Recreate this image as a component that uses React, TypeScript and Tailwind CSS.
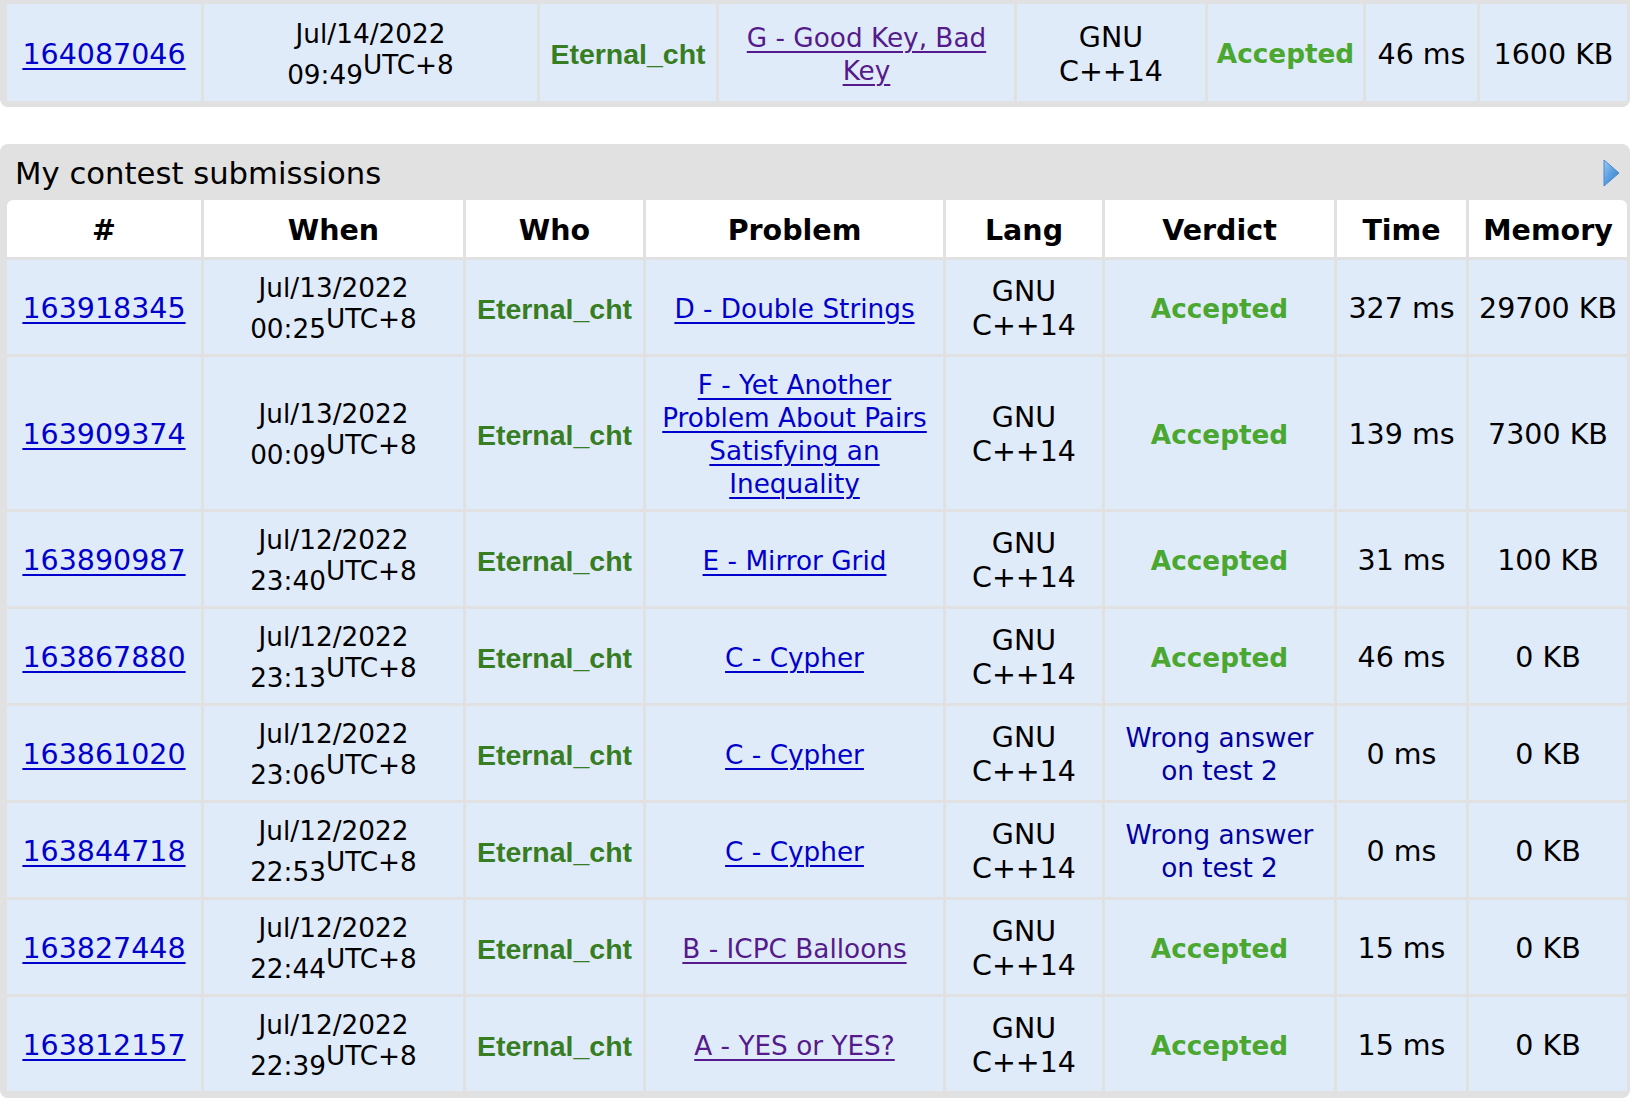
const verdana = { fontFamily: '"DejaVu Sans", Verdana, sans-serif' };

type Sub = {
  id: string;
  date: string;
  time: string;
  problem: string;
  visited: boolean;
  ok: boolean;
  runtime: string;
  memory: string;
};

const topRow: Sub = {
  id: "164087046",
  date: "Jul/14/2022",
  time: "09:49",
  problem: "G - Good Key, Bad Key",
  visited: true,
  ok: true,
  runtime: "46 ms",
  memory: "1600 KB",
};

const submissions: Sub[] = [
  { id: "163918345", date: "Jul/13/2022", time: "00:25", problem: "D - Double Strings", visited: false, ok: true, runtime: "327 ms", memory: "29700 KB" },
  { id: "163909374", date: "Jul/13/2022", time: "00:09", problem: "F - Yet Another Problem About Pairs Satisfying an Inequality", visited: false, ok: true, runtime: "139 ms", memory: "7300 KB" },
  { id: "163890987", date: "Jul/12/2022", time: "23:40", problem: "E - Mirror Grid", visited: false, ok: true, runtime: "31 ms", memory: "100 KB" },
  { id: "163867880", date: "Jul/12/2022", time: "23:13", problem: "C - Cypher", visited: false, ok: true, runtime: "46 ms", memory: "0 KB" },
  { id: "163861020", date: "Jul/12/2022", time: "23:06", problem: "C - Cypher", visited: false, ok: false, runtime: "0 ms", memory: "0 KB" },
  { id: "163844718", date: "Jul/12/2022", time: "22:53", problem: "C - Cypher", visited: false, ok: false, runtime: "0 ms", memory: "0 KB" },
  { id: "163827448", date: "Jul/12/2022", time: "22:44", problem: "B - ICPC Balloons", visited: true, ok: true, runtime: "15 ms", memory: "0 KB" },
  { id: "163812157", date: "Jul/12/2022", time: "22:39", problem: "A - YES or YES?", visited: true, ok: true, runtime: "15 ms", memory: "0 KB" },
];

// text sits a few px below the cell centre in the original, hence pt > pb
const cell = "bg-[#e0ebfa] text-center align-middle px-[6px] pt-[12px] pb-[8px]";
const big = "text-[28.5px] leading-[34px] text-black";
const small = "text-[26.3px] leading-[33px]";
const link = "underline decoration-[2px] underline-offset-[4px]";

const Row = ({ s, h }: { s: Sub; h: string }) => (
  <tr style={verdana}>
    <td className={`${cell} ${h} ${big}`}>
      <a href="#" className={`${link} text-[#0000cc]`}>{s.id}</a>
    </td>
    <td className={`${cell} ${h} ${small} text-black`}>
      <div>{s.date}</div>
      <div className="mt-[8px]">
        {s.time}
        <span className="relative -top-[10px]">UTC+8</span>
      </div>
    </td>
    <td className={`${cell} ${h}`}>
      <span
        className="text-[28.5px] font-bold text-[#377d22]"
        style={{ fontFamily: '"Liberation Sans", Arial, sans-serif' }}
      >
        Eternal_cht
      </span>
    </td>
    <td className={`${cell} ${h} ${small}`}>
      <a href="#" className={`${link} ${s.visited ? "text-[#551a8b]" : "text-[#0000cc]"}`}>{s.problem}</a>
    </td>
    <td className={`${cell} ${h} ${big}`}>
      GNU
      <br />
      C++14
    </td>
    <td className={`${cell} ${h} ${small}`}>
      {s.ok ? (
        <span className="font-bold text-[#4aa72f]">Accepted</span>
      ) : (
        <span className="text-[#0000a0]">
          Wrong answer
          <br />
          on test 2
        </span>
      )}
    </td>
    <td className={`${cell} ${h} ${big}`}>{s.runtime}</td>
    <td className={`${cell} ${h} ${big}`}>{s.memory}</td>
  </tr>
);

const Triangle = () => (
  <svg width="17" height="28" viewBox="0 0 17 28">
    <defs>
      <linearGradient id="tri" x1="0" y1="0" x2="1" y2="1">
        <stop offset="0" stopColor="#9ccaf2" />
        <stop offset="0.5" stopColor="#5a9de0" />
        <stop offset="1" stopColor="#3a78c8" />
      </linearGradient>
    </defs>
    <path d="M1 1 L16 14 L1 27 Z" fill="url(#tri)" stroke="#4a88d4" strokeWidth="1" strokeLinejoin="round" />
  </svg>
);

const headers = ["#", "When", "Who", "Problem", "Lang", "Verdict", "Time", "Memory"];
const topCols = [194, 333, 176, 295, 188, 155, 111, 147];
const mainCols = [194, 259, 177, 297, 156, 229, 129, 158];

export default function App() {
  return (
    <div className="bg-white w-[1638px] min-h-[1104px]">
      {/* last row of the previous table */}
      <div className="w-[1630px] bg-[#e1e1e1] rounded-b-[8px] pl-[4px] pt-[1px] pb-[3px]">
        <table className="w-[1626px] table-fixed border-separate border-spacing-[3px]">
          <colgroup>
            {topCols.map((w, i) => (
              <col key={i} style={{ width: w }} />
            ))}
          </colgroup>
          <tbody>
            <Row s={topRow} h="h-[97px]" />
          </tbody>
        </table>
      </div>

      {/* My contest submissions */}
      <div className="mt-[37px] w-[1630px] bg-[#e1e1e1] rounded-[8px] pl-[4px] pb-[4px]">
        <div className="h-[56px] pt-[2px] pl-[11px] pr-[10px] flex items-center justify-between">
          <span className="text-[30.7px] leading-[51px] text-black" style={verdana}>
            My contest submissions
          </span>
          <Triangle />
        </div>
        <table className="w-[1626px] table-fixed border-separate border-spacing-[3px] -mt-[3px]">
          <colgroup>
            {mainCols.map((w, i) => (
              <col key={i} style={{ width: w }} />
            ))}
          </colgroup>
          <thead>
            <tr style={verdana}>
              {headers.map((h, i) => (
                <th
                  key={h}
                  className={`bg-white h-[57px] pt-[4px] text-[28.5px] leading-[34px] font-bold text-black text-center ${
                    i === 0 ? "rounded-tl-[6px]" : ""
                  } ${i === headers.length - 1 ? "rounded-tr-[6px]" : ""}`}
                >
                  {h}
                </th>
              ))}
            </tr>
          </thead>
          <tbody>
            {submissions.map((s) => (
              <Row key={s.id} s={s} h="h-[94px]" />
            ))}
          </tbody>
        </table>
      </div>
    </div>
  );
}
